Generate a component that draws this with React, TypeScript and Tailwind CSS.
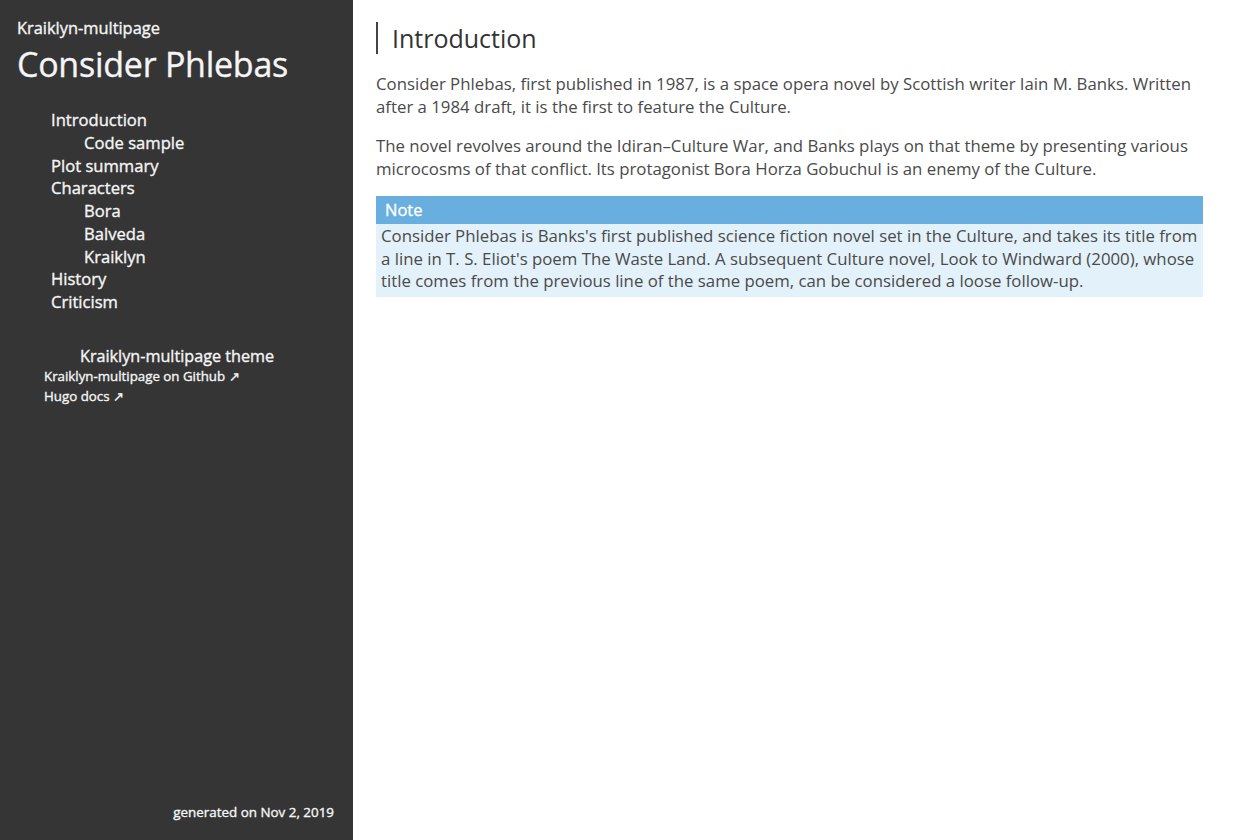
import React from "react";

const font = { fontFamily: '"Open Sans", "Noto Sans", sans-serif' };

export default function App() {
  return (
    <div className="flex w-[1260px] h-[840px] bg-white" style={font}>
      <aside className="w-[353px] shrink-0 bg-[#353535] text-[#f5f5f5] flex flex-col [-webkit-text-stroke:0.35px_#f5f5f5]">
        <div className="pl-[17px] pt-[16px]">
          <div className="text-[16.4px] leading-[24px]">Kraiklyn-multipage</div>
          <div className="text-[34px] leading-[46px] mt-[1px] tracking-[-0.25px]">Consider Phlebas</div>
        </div>
        <ul className="pl-[51px] mt-[22px] text-[16.6px] leading-[22.75px]">
          <li>Introduction
            <ul className="pl-[33px]"><li>Code sample</li></ul>
          </li>
          <li>Plot summary</li>
          <li>Characters
            <ul className="pl-[33px]"><li>Bora</li><li>Balveda</li><li>Kraiklyn</li></ul>
          </li>
          <li>History</li>
          <li>Criticism</li>
        </ul>
        <div className="mt-[31px] pl-[80px] text-[16.2px] leading-[22px]">Kraiklyn-multipage theme</div>
        <div className="pl-[44px] text-[13.3px] leading-[20px] mt-[-1px]">
          <div>Kraiklyn-multipage on Github ↗</div>
          <div>Hugo docs ↗</div>
        </div>
        <div className="mt-auto pb-[19px] pr-[19px] text-right text-[13.4px] leading-[18px]">generated on Nov 2, 2019</div>
      </aside>
      <main className="flex-1 pl-[23px] pr-[57px] pt-[22px] text-[#4a4a4a]">
        <h1 className="border-l-2 border-[#444] pl-[14px] text-[25px] leading-[32px] text-[#333]">Introduction</h1>
        <p className="mt-[18px] text-[16.8px] leading-[23px]">Consider Phlebas, first published in 1987, is a space opera novel by Scottish writer Iain M. Banks. Written after a 1984 draft, it is the first to feature the Culture.</p>
        <p className="mt-[16px] text-[16.8px] leading-[23px]">The novel revolves around the Idiran–Culture War, and Banks plays on that theme by presenting various microcosms of that conflict. Its protagonist Bora Horza Gobuchul is an enemy of the Culture.</p>
        <div className="mt-[16px]">
          <div className="bg-[#68afdf] text-white text-[16.5px] leading-[28px] px-[9px] [-webkit-text-stroke:0.35px_#ffffff]">Note</div>
          <div className="bg-[#e3f1fa] text-[16.8px] leading-[22.5px] px-[5px] pt-[1px] pb-[4px]">Consider Phlebas is Banks's first published science fiction novel set in the Culture, and takes its title from a line in T. S. Eliot's poem The Waste Land. A subsequent Culture novel, Look to Windward (2000), whose title comes from the previous line of the same poem, can be considered a loose follow-up.</div>
        </div>
      </main>
    </div>
  );
}
